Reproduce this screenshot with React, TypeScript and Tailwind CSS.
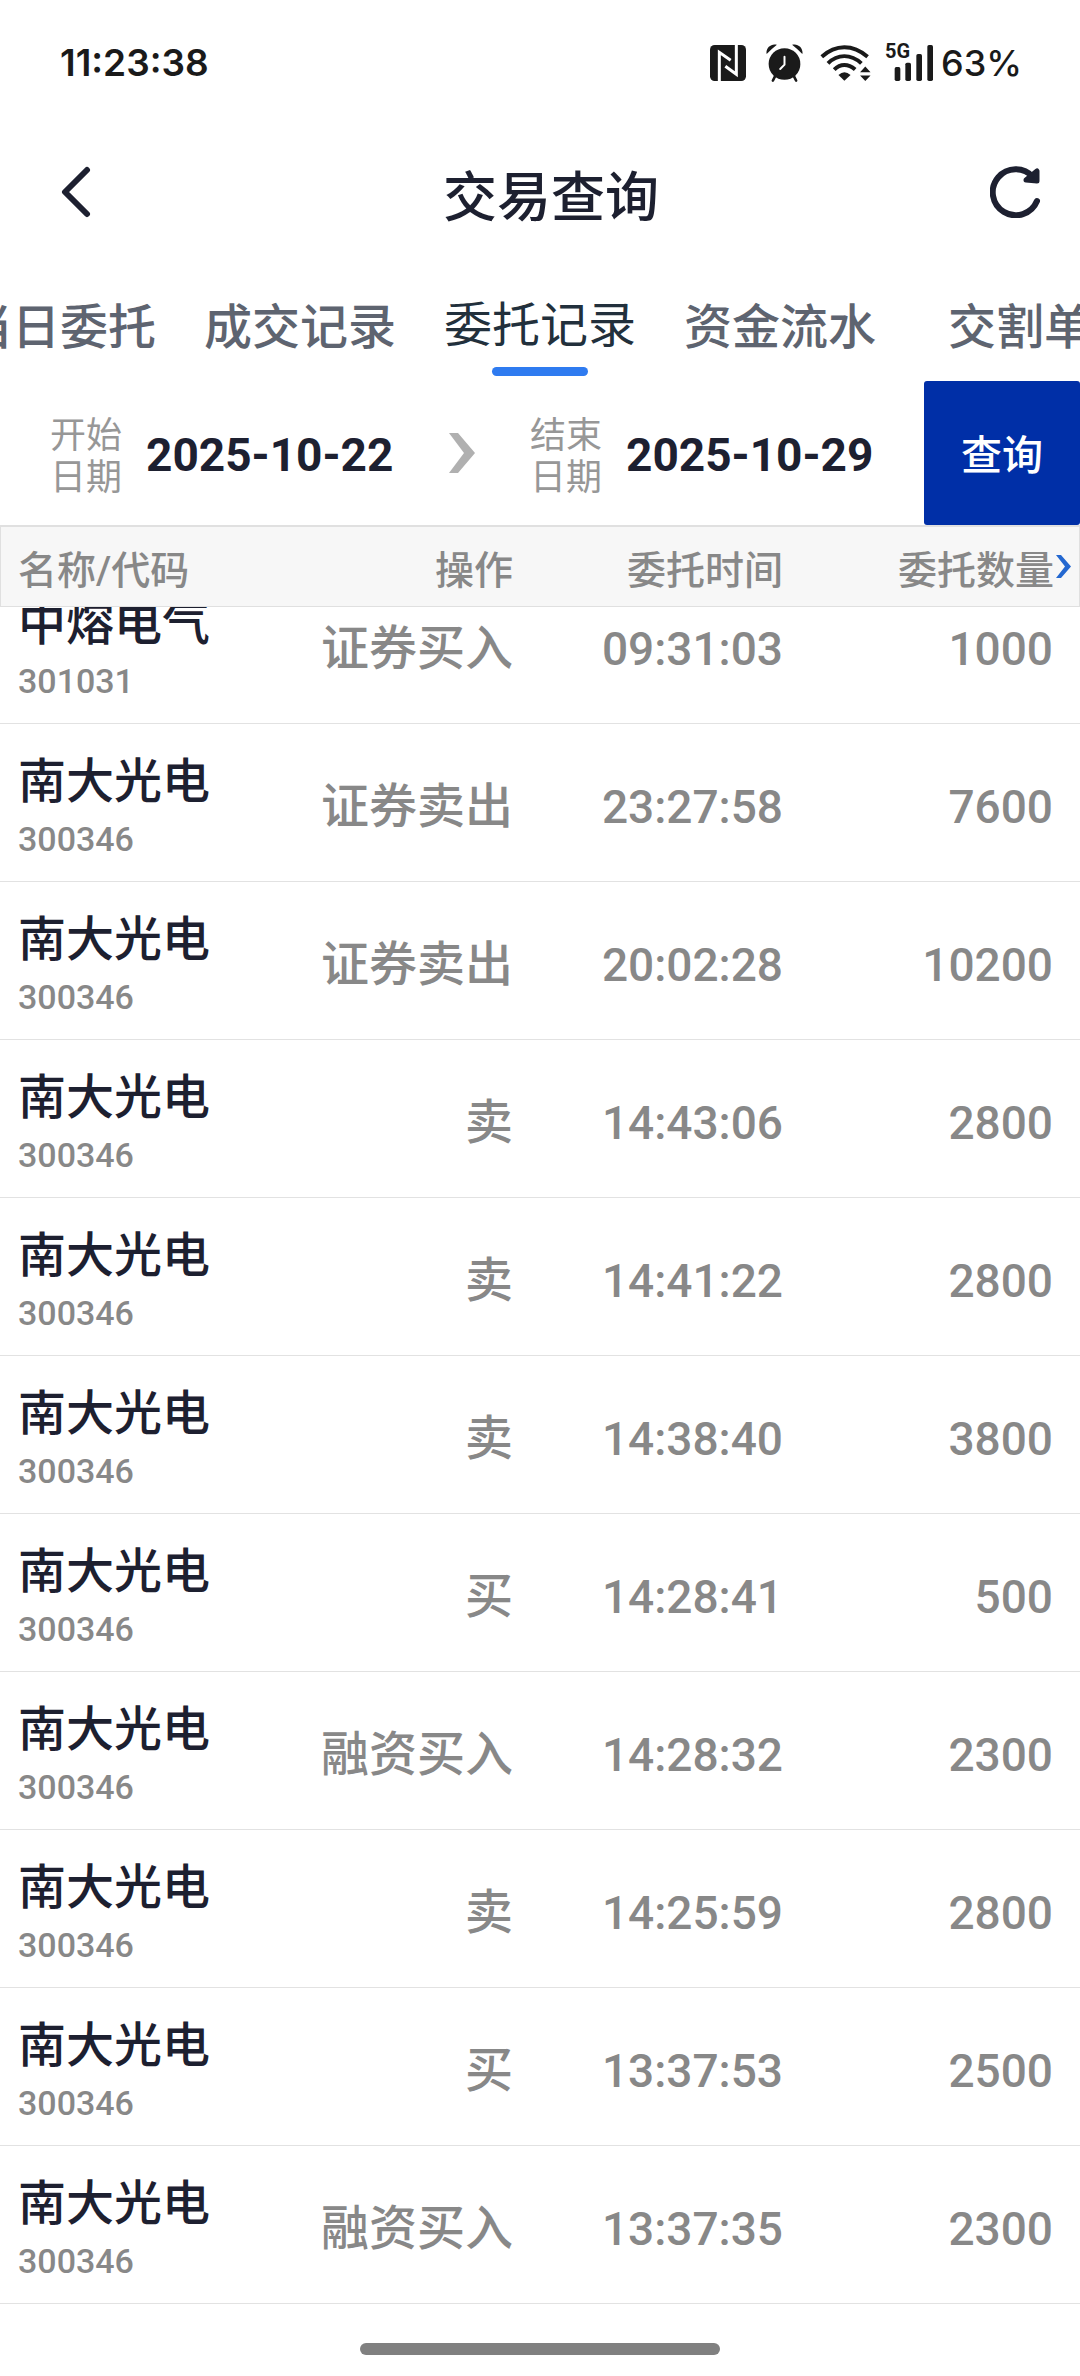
import { useState } from "react"

const TABS = ["当日委托", "成交记录", "委托记录", "资金流水", "交割单"]

const ORDERS = [
    { name: "中熔电气", code: "301031", action: "证券买入", time: "09:31:03", qty: 1000 },
    { name: "南大光电", code: "300346", action: "证券卖出", time: "23:27:58", qty: 7600 },
    { name: "南大光电", code: "300346", action: "证券卖出", time: "20:02:28", qty: 10200 },
    { name: "南大光电", code: "300346", action: "卖", time: "14:43:06", qty: 2800 },
    { name: "南大光电", code: "300346", action: "卖", time: "14:41:22", qty: 2800 },
    { name: "南大光电", code: "300346", action: "卖", time: "14:38:40", qty: 3800 },
    { name: "南大光电", code: "300346", action: "买", time: "14:28:41", qty: 500 },
    { name: "南大光电", code: "300346", action: "融资买入", time: "14:28:32", qty: 2300 },
    { name: "南大光电", code: "300346", action: "卖", time: "14:25:59", qty: 2800 },
    { name: "南大光电", code: "300346", action: "买", time: "13:37:53", qty: 2500 },
    { name: "南大光电", code: "300346", action: "融资买入", time: "13:37:35", qty: 2300 },
]

function NfcIcon() {
    return (
        <svg viewBox="0 0 108 108" className="size-9">
            <rect width="108" height="108" rx="14" fill="#1a1a1a" />
            <path d="M28 108V22L62 46M79 0V88L46 64" fill="none" stroke="#fff" strokeWidth="9" />
        </svg>
    )
}

function AlarmIcon() {
    return (
        <svg viewBox="0 0 112 114" className="h-[38px] w-[37px]" fill="#1a1a1a">
            <circle cx="56" cy="60" r="48" />
            <path d="M2 30C-2 12 16-4 33 2Q20 12 2 30ZM110 30C114 12 96-4 79 2Q92 12 110 30Z" />
            <path d="M28 96L21 110M84 96L91 110" stroke="#1a1a1a" strokeWidth="8" strokeLinecap="round" />
            <path d="M56 38V62L43 75" fill="none" stroke="#fff" strokeWidth="6" strokeLinecap="round" />
        </svg>
    )
}

function WifiIcon() {
    return (
        <svg viewBox="0 0 153 110" className="h-9 w-[51px]" fill="none" stroke="#1a1a1a" strokeWidth="12">
            <path d="M4 36Q36 7 73 7T144 36M23 56Q45 34 73 34T125 56M42 75Q56 61 73 61T106 75" />
            <path d="M55 92Q73 74 92 92L73 109Z" fill="#1a1a1a" stroke="none" />
            <path d="M121 83L137 66L153 83ZM121 93L137 110L153 93Z" fill="#1a1a1a" stroke="none" />
        </svg>
    )
}

function SignalIcon() {
    return (
        <div className="relative">
            <svg viewBox="0 0 144 108" className="h-9 w-12" fill="#1a1a1a">
                <rect x="29" y="66" width="17" height="42" rx="5" />
                <rect x="61" y="53" width="17" height="55" rx="5" />
                <rect x="94" y="27" width="17" height="81" rx="5" />
                <rect x="127" y="0" width="17" height="108" rx="5" />
            </svg>
            <span className="absolute -top-1 left-0 text-[20px] leading-5 font-bold">5G</span>
        </div>
    )
}

function StatusBar() {
    return (
        <div className="flex h-[126px] items-center justify-between pr-[58px] pl-[60px] text-[#1a1a1a]">
            <span className="font-[Inter,sans-serif] text-[37px] font-semibold">11:23:38</span>
            <div className="flex items-center">
                <NfcIcon />
                <div className="ml-5"><AlarmIcon /></div>
                <div className="ml-[17px]"><WifiIcon /></div>
                <div className="ml-[14px]"><SignalIcon /></div>
                <span className="ml-2 font-[Inter,sans-serif] text-[36px] font-medium">63%</span>
            </div>
        </div>
    )
}

function TitleBar() {
    return (
        <header className="flex h-[132px] items-center justify-between pr-[38px] pl-[60px] text-[#1d2030]">
            <button type="button" aria-label="返回">
                <svg viewBox="0 0 32 52" className="h-[52px] w-8" fill="none" stroke="currentColor" strokeWidth="6" strokeLinecap="round" strokeLinejoin="round">
                    <path d="M27 4L5 26L27 48" />
                </svg>
            </button>
            <h1 className="pt-3 pl-5 text-[54px] font-medium">交易查询</h1>
            <button type="button" aria-label="刷新">
                <svg viewBox="0 0 52 52" className="size-[52px]" fill="none" stroke="currentColor" strokeWidth="6" strokeLinecap="round" strokeLinejoin="round">
                    <path d="M43 11A23 23 0 1 0 47 35" />
                    <path d="M47 5V15L36 14Z" fill="currentColor" strokeWidth="5" />
                </svg>
            </button>
        </header>
    )
}

function DateField({ id, label, value }: { id: string, label: string, value: string }) {
    return (
        <div className="flex items-center">
            <label htmlFor={id} className="w-[72px] pt-2 text-[36px] leading-[42px] text-[#979797]">{label}</label>
            <input
                id={id}
                type="text"
                readOnly
                value={value}
                className="ml-6 w-[248px] pt-1 text-[46px] font-bold text-[#1d2030] outline-none"
            />
        </div>
    )
}

export default function App() {
    const [active, setActive] = useState(2)

    return (
        <div className="flex min-h-screen flex-col bg-white font-[Roboto,'Noto_Sans_CJK_SC',sans-serif]">
            <StatusBar />
            <TitleBar />

            <nav className="flex h-[123px] justify-center overflow-hidden">
                {TABS.map((tab, i) => (
                    <button
                        key={tab}
                        type="button"
                        onClick={() => setActive(i)}
                        className={
                            i === active
                                ? "flex w-60 shrink-0 flex-col items-center pt-8 text-[48px] leading-[72px] text-[#22303c]"
                                : "flex w-60 shrink-0 flex-col items-center pt-[34px] text-[48px] leading-[72px] font-medium text-[#5e6470]"
                        }
                    >
                        {tab}
                        {i === active && <span className="mt-[5px] h-[9px] w-24 rounded-full bg-[#2f7bf0]" />}
                    </button>
                ))}
            </nav>

            <form className="flex h-36 items-stretch pl-[50px]" onSubmit={(e) => e.preventDefault()}>
                <div className="flex grow items-center justify-between pr-[50px]">
                    <DateField id="start" label="开始日期" value="2025-10-22" />
                    <svg viewBox="0 0 26 40" className="h-10 w-[26px]" fill="#b0b0b0">
                        <path d="M0 0H9L26 20L9 40H0L15 20Z" />
                    </svg>
                    <DateField id="end" label="结束日期" value="2025-10-29" />
                </div>
                <button type="submit" className="w-[156px] rounded-[3px] bg-[#002fa7] pt-2 text-[41px] font-medium text-white">查询</button>
            </form>

            {/* list is scrolled a little, so the first row sits partly under the sticky head */}
            <div className="overflow-hidden">
                <table className="-mt-[41px] w-full table-fixed border-separate border-spacing-0 text-right font-medium text-[#888]">
                    <thead className="sticky top-0 z-10 bg-[#f7f7f7] text-[39px] leading-[60px]">
                        <tr className="h-[82px]">
                            <th className="border-t-2 border-b border-l border-[#e0e0e0] pt-2 pl-[17px] text-left font-medium">名称/代码</th>
                            <th className="border-t-2 border-b border-[#e0e0e0] pt-2 pr-[27px] font-medium">操作</th>
                            <th className="border-t-2 border-b border-[#e0e0e0] pt-2 pr-[27px] font-medium">委托时间</th>
                            <th className="border-t-2 border-r border-b border-[#e0e0e0] pt-2 pr-2 font-medium">
                                <div className="flex items-center justify-end gap-0.5">
                                    委托数量
                                    <svg viewBox="0 0 15 23" className="mb-2 h-[23px] w-[15px]" fill="#2468d0">
                                        <path d="M0 0H5L15 11.5L5 23H0L9 11.5Z" />
                                    </svg>
                                </div>
                            </th>
                        </tr>
                    </thead>
                    <tbody className="leading-[72px]">
                        {ORDERS.map((o) => (
                            <tr key={o.time} className="h-[158px]">
                                <td className="border-b border-[#e2e2e2] pt-0.5 pl-[18px] text-left">
                                    <div className="text-[48px] leading-[70px] text-[#1d2030]">{o.name}</div>
                                    <div className="text-[34px] leading-[44px]">{o.code}</div>
                                </td>
                                <td className="border-b border-[#e2e2e2] pt-2 pr-[27px] text-[48px]">{o.action}</td>
                                <td className="border-b border-[#e2e2e2] pt-2 pr-[27px] text-[46px]">{o.time}</td>
                                <td className="border-b border-[#e2e2e2] pt-2 pr-[27px] text-[46px]">{o.qty}</td>
                            </tr>
                        ))}
                    </tbody>
                </table>
            </div>

            <div className="flex justify-center pt-[39px] pb-[21px]">
                <div className="h-3 w-[360px] rounded-full bg-[#808080]" />
            </div>
        </div>
    )
}
